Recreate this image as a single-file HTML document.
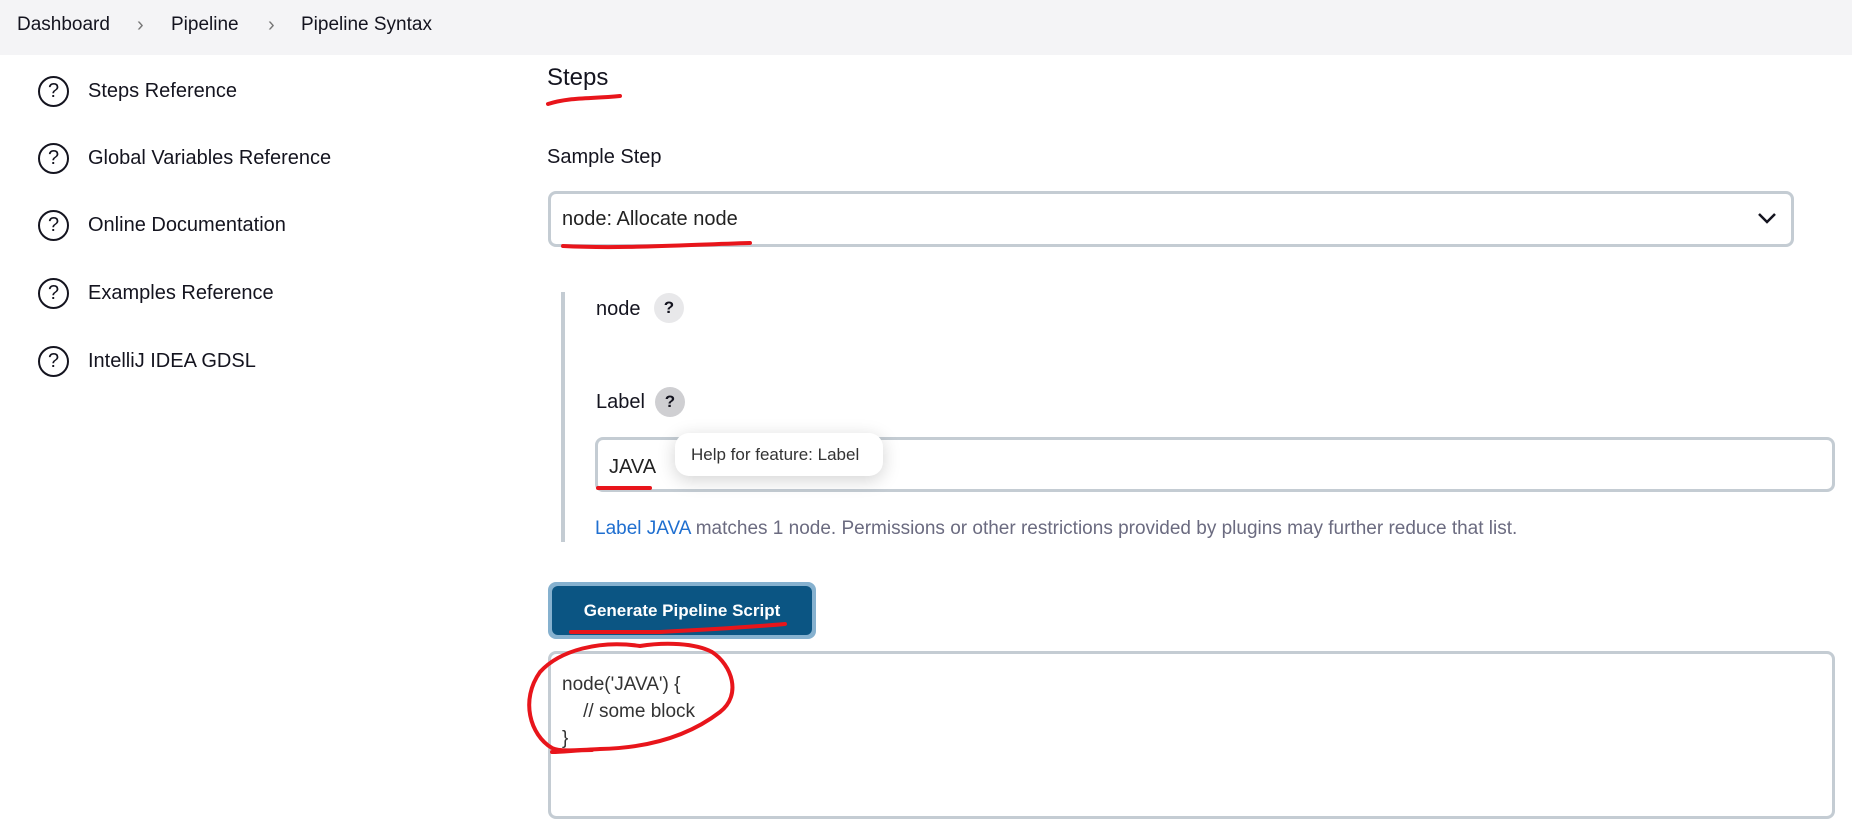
<!DOCTYPE html>
<html><head><meta charset="utf-8">
<style>
*{box-sizing:border-box;margin:0;padding:0}
body{width:1852px;height:838px;background:#fff;font-family:"Liberation Sans",sans-serif;color:#14141f;position:relative;overflow:hidden}
.abs{position:absolute}
.hdr{left:0;top:0;width:1852px;height:55px;background:#f4f4f6}
.bc{top:14px;font-size:19px;color:#14141f}
.chev{top:14px;font-size:20px;color:#777}
.side{left:38px;font-size:20px;display:flex;align-items:center}
.side .ic{width:31px;height:31px;border:2.5px solid #14141f;border-radius:50%;font-size:20px;display:flex;align-items:center;justify-content:center;margin-right:19px}
.q{width:30px;height:30px;border-radius:50%;background:#e8e8ea;font-weight:bold;font-size:17px;display:flex;align-items:center;justify-content:center}
.box{border:3px solid #c4ccd3;border-radius:8px;background:#fff}
</style></head><body>
<div class="abs hdr"></div>
<div class="abs bc" style="left:17px">Dashboard</div>
<div class="abs chev" style="left:137px">&#8250;</div>
<div class="abs bc" style="left:171px">Pipeline</div>
<div class="abs chev" style="left:268px">&#8250;</div>
<div class="abs bc" style="left:301px">Pipeline Syntax</div>

<div class="abs side" style="top:76px"><span class="ic">?</span>Steps Reference</div>
<div class="abs side" style="top:143px"><span class="ic">?</span>Global Variables Reference</div>
<div class="abs side" style="top:210px"><span class="ic">?</span>Online Documentation</div>
<div class="abs side" style="top:278px"><span class="ic">?</span>Examples Reference</div>
<div class="abs side" style="top:346px"><span class="ic">?</span>IntelliJ IDEA GDSL</div>

<div class="abs" style="left:547px;top:64px;font-size:24px">Steps</div>
<div class="abs" style="left:547px;top:146px;font-size:20px">Sample Step</div>
<div class="abs box" style="left:548px;top:191px;width:1246px;height:56px"></div>
<div class="abs" style="left:562px;top:208px;font-size:20px;color:#222">node: Allocate node</div>
<svg class="abs" style="left:1756px;top:211px" width="22" height="14"><path d="M3 3 L11 11 L19 3" fill="none" stroke="#14141f" stroke-width="2.5"/></svg>

<div class="abs" style="left:561px;top:292px;width:4px;height:250px;background:#c4ccd3"></div>
<div class="abs" style="left:596px;top:298px;font-size:20px">node</div>
<div class="abs q" style="left:654px;top:293px">?</div>
<div class="abs" style="left:596px;top:391px;font-size:20px">Label</div>
<div class="abs q" style="left:655px;top:387px;background:#cfcfd2">?</div>
<div class="abs box" style="left:595px;top:437px;width:1240px;height:55px"></div>
<div class="abs" style="left:609px;top:456px;font-size:20px;color:#222">JAVA</div>
<div class="abs" style="left:675px;top:433px;width:208px;height:43px;background:#fff;border-radius:14px;box-shadow:0 4px 18px rgba(0,0,0,.18);font-size:17px;color:#333;padding:12px 0 0 16px">Help for feature: Label</div>
<div class="abs" style="left:595px;top:518px;font-size:19px;color:#6b6b80"><span style="color:#1f6fd0">Label JAVA</span> matches 1 node. Permissions or other restrictions provided by plugins may further reduce that list.</div>

<div class="abs" style="left:548px;top:582px;width:268px;height:57px;background:#86b1cf;border-radius:8px"></div>
<div class="abs" style="left:552px;top:586px;width:260px;height:49px;background:#0b5583;border-radius:6px;color:#fff;font-weight:bold;font-size:17px;text-align:center;line-height:50px">Generate Pipeline Script</div>

<div class="abs box" style="left:548px;top:651px;width:1287px;height:168px"></div>
<div class="abs" style="left:562px;top:671px;font-size:19px;line-height:27px;color:#333;white-space:pre">node('JAVA') {
    // some block
}</div>

<svg class="abs" style="left:0;top:0" width="1852" height="838">
<g fill="none" stroke="#e8151b" stroke-width="4" stroke-linecap="round">
<path d="M548 104 C570 97 590 99 620 96"/>
<path d="M563 246 C620 249 680 245 750 243"/>
<path d="M598 488 L650 488"/>
<path d="M571 632 L660 632 C700 630 740 628 785 624"/>
<path d="M640 646 C600 640 560 650 540 672 C520 700 530 735 552 748 C560 752 580 750 600 749 C650 748 690 735 720 712 C742 695 732 665 712 652 C695 643 665 642 640 646"/>
<path d="M552 752 C565 752 575 750 592 750"/>
</g>
</svg>
</body></html>
